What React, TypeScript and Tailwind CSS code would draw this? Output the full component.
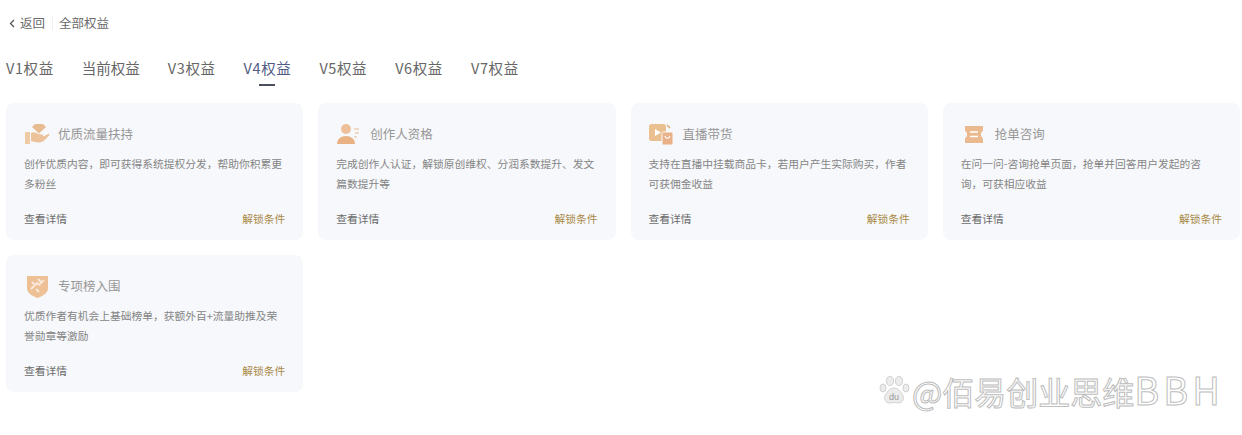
import React from 'react';

const cjk = "font-['Noto_Sans_CJK_SC','Noto_Sans',sans-serif]";

const HandIcon = () => (
  <svg width="26" height="22" viewBox="0 0 26 22">
    <path d="M11 1h8l3 3-7 6.500L8 4z" fill="#e8bc92" />
    <path d="M1 9h5v12H1z" fill="#eecaa6" />
    <path d="M7 10c3-1.500 5-.5 7 1l4 .5c1.500.2 1.500 2.500 0 2.500h-5c3 .5 6 0 11-3 1-.5 2 .5 1 1.500-3 3.500-6 7-10 7-3 0-5-1-8-1.500z" fill="#ebc29a" />
  </svg>
);

const PersonIcon = () => (
  <svg width="24" height="22" viewBox="0 0 24 22">
    <circle cx="9" cy="6" r="5" fill="#eec09a" />
    <path d="M0 21c0-5 4-8 9-8s9 3 9 8z" fill="#e8b285" />
    <path d="M17 6h5M18 10h4M17 14h3" stroke="#ecd0b4" strokeWidth="1.300" />
  </svg>
);

const LiveIcon = () => (
  <svg width="25" height="23" viewBox="0 0 25 23">
    <rect x="0" y="1" width="17" height="17" rx="2.500" fill="#ebc090" />
    <path d="M6 6l6 3.500-6 3.500z" fill="#fff" />
    <path d="M18 2l3 3" stroke="#dcae7c" strokeWidth="1.500" />
    <rect x="13" y="9" width="11" height="13" rx="1.500" fill="#eab088" stroke="#f6f8fb" />
    <path d="M16 13c1 3 4 3 5 0" stroke="#fff" strokeWidth="1.200" fill="none" />
  </svg>
);

const TicketIcon = () => (
  <svg width="20" height="19" viewBox="0 0 20 19">
    <path d="M1 1h18v5c-1.500.5-2 1.800-2 3.500s.5 3 2 3.500v5H1v-5c1.500-.5 2-1.800 2-3.500S2.500 6.500 1 6z" fill="#eab98e" />
    <path d="M6 7h8M6 11.500h8" stroke="#fff" strokeWidth="1.500" />
  </svg>
);

const BadgeIcon = () => (
  <svg width="21" height="24" viewBox="0 0 21 24">
    <path d="M0 2h21v12c0 5-5 8-10.500 10C5 22 0 19 0 14z" fill="#edc096" />
    <path d="M4 15l6-6 2 2 5-5M11 5l4 4M5 8l3 3M9 15l3 3" stroke="#fbeadb" strokeWidth="1.800" fill="none" />
  </svg>
);

const tabs = ['V1权益', '当前权益', 'V3权益', 'V4权益', 'V5权益', 'V6权益', 'V7权益'];

const cards = [
  {
    icon: <HandIcon />,
    title: '优质流量扶持',
    desc: '创作优质内容，即可获得系统提权分发，帮助你积累更多粉丝',
  },
  {
    icon: <PersonIcon />,
    title: '创作人资格',
    desc: '完成创作人认证，解锁原创维权、分润系数提升、发文篇数提升等',
  },
  {
    icon: <LiveIcon />,
    title: '直播带货',
    desc: '支持在直播中挂载商品卡，若用户产生实际购买，作者可获佣金收益',
  },
  {
    icon: <TicketIcon />,
    title: '抢单咨询',
    desc: '在问一问-咨询抢单页面，抢单并回答用户发起的咨询，可获相应收益',
  },
  {
    icon: <BadgeIcon />,
    title: '专项榜入围',
    desc: '优质作者有机会上基础榜单，获额外百+流量助推及荣誉勋章等激励',
  },
];

const App: React.FC = () => {
  return (
    <div className={`relative w-[1242px] h-[435px] overflow-hidden bg-white pl-[6px] pr-[2px] ${cjk}`}>
      {/* Top bar */}
      <div className="flex items-center h-[46px] pl-[3px] text-[12.500px] text-[#6a6a6a]">
        <svg width="6" height="9" viewBox="0 0 6 9" className="mr-[5px]">
          <path d="M5 1L1.500 4.500 5 8" stroke="#555" strokeWidth="1.300" fill="none" />
        </svg>
        <span>返回</span>
        <span className="w-px h-[14px] bg-[#f0f0f0] ml-[7px] mr-[6px]" />
        <span>全部权益</span>
      </div>

      {/* Tabs */}
      <div className="flex gap-[28px] h-[57px] pt-[9px] text-[14.500px] leading-[26px] text-[#666]">
        {tabs.map((t) => (
          <div
            key={t}
            className={
              t === 'V4权益'
                ? 'relative tracking-[0.600px] text-[#4f5b85]'
                : t === '当前权益'
                  ? ''
                  : 'tracking-[0.600px]'
            }
          >
            {t}
            {t === 'V4权益' && (
              <span className="absolute left-[15px] top-[29px] w-[16px] h-[2px] bg-[#4a4f5e]" />
            )}
          </div>
        ))}
      </div>

      {/* Cards */}
      <div className="grid grid-cols-4 gap-x-[15px] gap-y-[15px]">
        {cards.map((c) => (
          <div key={c.title} className="h-[137px] rounded-[8px] bg-[#f6f8fb] px-[18px] pt-[17px]">
            <div className="flex items-center h-[28px]">
              <div className="flex items-center justify-center w-[26px] h-[28px]">{c.icon}</div>
              <span className="ml-[8px] text-[12.500px] text-[#969696]">{c.title}</span>
            </div>
            <p className="mt-[6px] h-[40px] text-[10.750px] leading-[20px] text-[#858585]">{c.desc}</p>
            <div className="flex justify-between mt-[15px] text-[10.750px] leading-[20px]">
              <span className="text-[#6b6b6b]">查看详情</span>
              <span className="text-[#a98a48]">解锁条件</span>
            </div>
          </div>
        ))}
      </div>

      {/* Watermark */}
      <div className="absolute left-[878px] top-[372px] flex items-center h-[36px]">
        <svg width="32" height="30" viewBox="0 0 32 30" className="mr-[2px]">
          <g fill="#ececec" stroke="#c8c8c8" strokeWidth="0.800">
            <ellipse cx="5" cy="13" rx="3" ry="4" />
            <ellipse cx="12" cy="6" rx="3.500" ry="4.500" />
            <ellipse cx="21" cy="6" rx="3.500" ry="4.500" />
            <ellipse cx="28" cy="13" rx="3" ry="4" />
            <path d="M16 13c4 0 6 3 8 6 3 4 1 9-4 9-2 0-3-.5-4-.5s-2 .5-4 .5c-5 0-7-5-4-9 2-3 4-6 8-6z" />
          </g>
          <text x="16" y="25" textAnchor="middle" fontSize="9" fontFamily="'Liberation Sans', sans-serif" fill="#999">du</text>
        </svg>
        <span className="text-[32px] leading-[36px] text-white [-webkit-text-stroke:1px_#bdbdbd]">
          @佰易创业思维<span className="text-[38px] tracking-[4px]">BBH</span>
        </span>
      </div>
    </div>
  );
};

export default App;
